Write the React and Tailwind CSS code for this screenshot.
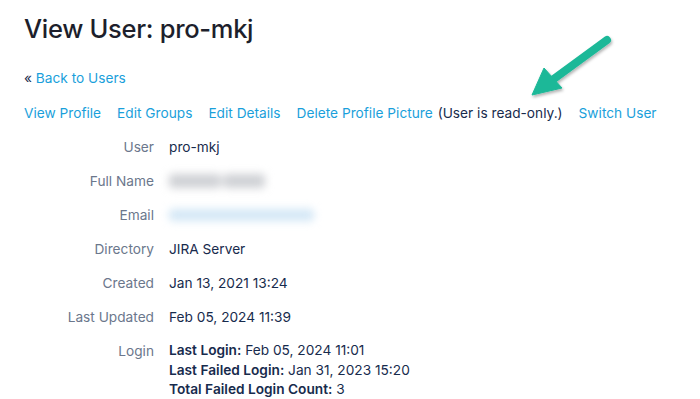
function Arrow() {
  return (
    <svg
      className="pointer-events-none absolute left-[520px] top-[25px]"
      width="110"
      height="85"
      viewBox="520 25 110 85"
      aria-hidden="true"
    >
      <defs>
        <filter id="arrowShadow" x="-20%" y="-20%" width="140%" height="140%">
          <feDropShadow dx="1" dy="2" stdDeviation="1.5" floodColor="#000" floodOpacity="0.3" />
        </filter>
      </defs>
      <g filter="url(#arrowShadow)" fill="#1cb898" stroke="#1cb898">
        <line x1="607" y1="40" x2="551" y2="81" strokeWidth="8" strokeLinecap="round" />
        <polygon points="532,95 544,68 562,88" strokeWidth="1" strokeLinejoin="round" />
      </g>
    </svg>
  );
}

const rows = [
  { label: 'User', value: 'pro-mkj' },
  { label: 'Full Name', blur: 'name' },
  { label: 'Email', blur: 'email' },
  { label: 'Directory', value: 'JIRA Server' },
  { label: 'Created', value: 'Jan 13, 2021 13:24' },
  { label: 'Last Updated', value: 'Feb 05, 2024 11:39' },
];

const navLinks = ['View Profile', 'Edit Groups', 'Edit Details', 'Delete Profile Picture'];

export default function App() {
  return (
    <div className="relative h-[399px] w-[700px] overflow-hidden bg-white pl-6 text-[#172b4d] font-['Inter',sans-serif]">
      <h1 className="pt-[11px] text-[25.5px] font-medium leading-[36px] tracking-[-0.3px] text-[#1d1f2c]">
        View User: pro-mkj
      </h1>

      <p className="mt-[21px] text-[13.7px] leading-5">
        <span className="text-[#172b4d]">« </span>
        <a className="text-[#1a9fdb]">Back to Users</a>
      </p>

      <div className="mt-[15px] flex items-center text-[13.7px] leading-5">
        {navLinks.map((l) => (
          <a key={l} className="mr-4 text-[#1a9fdb]">
            {l}
          </a>
        ))}
        <span className="-ml-[11px] mr-4 text-[#172b4d]">(User is read-only.)</span>
        <a className="text-[#1a9fdb]">Switch User</a>
      </div>

      <dl className="mt-[14px] grid grid-cols-[130px_1fr] gap-x-[15px] gap-y-[14px] text-[13.7px] leading-5">
        {rows.map((r) => (
          <div key={r.label} className="contents">
            <dt className="text-right text-[#6b778c]">{r.label}</dt>
            <dd className="flex items-center">
              {r.value && <span>{r.value}</span>}
              {r.blur === 'name' && (
                <div className="flex gap-[2px] blur-[4px]">
                  <div className="h-[14px] w-[52px] rounded-sm bg-[#cfd1d5]" />
                  <div className="h-[14px] w-[42px] rounded-sm bg-[#cfd1d5]" />
                </div>
              )}
              {r.blur === 'email' && (
                <div className="h-[12px] w-[145px] rounded-sm bg-[#d3e7f6] blur-[4px]" />
              )}
            </dd>
          </div>
        ))}
        <dt className="text-right text-[#6b778c]">Login</dt>
        <dd className="leading-[19.5px]">
          <div>
            <b className="font-semibold">Last Login:</b> Feb 05, 2024 11:01
          </div>
          <div>
            <b className="font-semibold">Last Failed Login:</b> Jan 31, 2023 15:20
          </div>
          <div>
            <b className="font-semibold">Total Failed Login Count:</b> 3
          </div>
        </dd>
      </dl>

      <Arrow />
    </div>
  );
}
